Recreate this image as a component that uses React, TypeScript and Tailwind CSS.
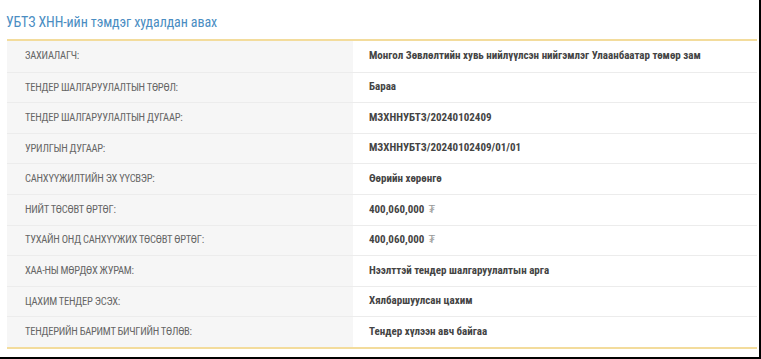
import React from 'react';

interface Row {
  label: string;
  value: string;
  money?: boolean;
}

const rows: Row[] = [
  { label: 'Захиалагч:', value: 'Монгол Зөвлөлтийн хувь нийлүүлсэн нийгэмлэг Улаанбаатар төмөр зам' },
  { label: 'Тендер шалгаруулалтын төрөл:', value: 'Бараа' },
  { label: 'Тендер шалгаруулалтын дугаар:', value: 'МЗХННУБТЗ/20240102409' },
  { label: 'Урилгын дугаар:', value: 'МЗХННУБТЗ/20240102409/01/01' },
  { label: 'Санхүүжилтийн эх үүсвэр:', value: 'Өөрийн хөрөнгө' },
  { label: 'Нийт төсөвт өртөг:', value: '400,060,000', money: true },
  { label: 'Тухайн онд санхүүжих төсөвт өртөг:', value: '400,060,000', money: true },
  { label: 'ХАА-ны мөрдөх журам:', value: 'Нээлттэй тендер шалгаруулалтын арга' },
  { label: 'Цахим тендер эсэх:', value: 'Хялбаршуулсан цахим' },
  { label: 'Тендерийн баримт бичгийн төлөв:', value: 'Тендер хүлээн авч байгаа' },
];

const App: React.FC = () => {
  return (
    <div
      className="w-[761px] h-[359px] bg-white border-r-2 border-b-2 border-black overflow-hidden"
      style={{ fontFamily: '"Liberation Sans Narrow", "Roboto Condensed", "Liberation Sans", sans-serif' }}
    >
      <div className="pl-[6px] pr-[2px]">
        <h2 className="h-[39px] pt-[13px] text-[14px] leading-[19px] tracking-[-0.1px] text-[#4a8dc2]">
          УБТЗ ХНН-ийн тэмдэг худалдан авах
        </h2>
        <div className="ml-px w-[750px] border-t-2 border-b-2 border-[#f3dc9c]">
          {rows.map((row, i) => (
            <div
              key={i}
              className={`flex h-[30.6px] ${i > 0 ? 'border-t border-[#ececec]' : ''}`}
            >
              <div className="w-[346px] bg-[#f6f6f6] pl-[18px] flex items-center text-[10.5px] tracking-[-0.25px] uppercase text-[#666]">
                {row.label}
              </div>
              <div className="flex-1 pl-[16px] flex items-center text-[11px] font-bold text-[#444]">
                {row.value}
                {row.money && <span className="ml-[4px] font-normal text-[#999]">₮</span>}
              </div>
            </div>
          ))}
        </div>
      </div>
    </div>
  );
};

export default App;
